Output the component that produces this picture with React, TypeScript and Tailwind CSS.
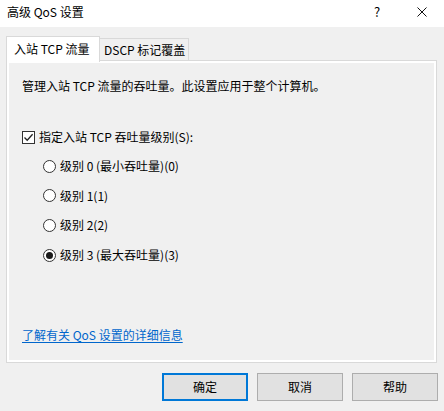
import { useState } from 'react'

const levels = ['级别 0 (最小吞吐量)(0)', '级别 1(1)', '级别 2(2)', '级别 3 (最大吞吐量)(3)']

function Radio({ checked, label, onClick }: { checked: boolean; label: string; onClick: () => void }) {
  return (
    <button onClick={onClick} className="flex h-[16px] items-center gap-[4px] text-left">
      <span className="flex h-[13px] w-[13px] items-center justify-center rounded-full border border-[#333333] bg-white">
        {checked && <span className="h-[7px] w-[7px] rounded-full bg-[#1a1a1a]" />}
      </span>
      <span>{label}</span>
    </button>
  )
}

export default function App() {
  const [enabled, setEnabled] = useState(true)
  const [level, setLevel] = useState(3)

  return (
    <div className="flex h-[411px] w-[444px] flex-col bg-[#f0f0f0] font-['Noto_Sans_CJK_SC','Noto_Sans',sans-serif] text-[12px] leading-[16px] text-black">
      <div className="flex h-[27px] items-center bg-white pl-[7px]">
        <span className="-mt-[3px]">高级 QoS 设置</span>
        <span className="ml-auto -mt-[3px] w-[10px] text-center text-[13px]">?</span>
        <svg className="ml-[35px] mr-[17px] -mt-[4px]" width="10" height="10" viewBox="0 0 10 10">
          <path d="M0.5 0.5 L9.5 9.5 M9.5 0.5 L0.5 9.5" stroke="#111" strokeWidth="1" />
        </svg>
      </div>

      <div className="ml-[6px] mt-[9px] flex items-start">
        <div className="relative z-10 -mb-[2px] flex h-[26px] w-[94px] items-start border border-b-0 border-[#d9d9d9] bg-white pl-[7px] pt-[4px]">
          入站 TCP 流量
        </div>
        <div className="mt-[2px] flex h-[22px] w-[89px] items-start border border-b-0 border-l-0 border-[#d9d9d9] bg-[#f0f0f0] pl-[4px] pt-[3px]">
          DSCP 标记覆盖
        </div>
      </div>

      <div className="ml-[6px] h-[303px] w-[431px] border border-[#d9d9d9] bg-white p-[2px]">
        <div className="flex h-full flex-col bg-[#f0f0f0] pl-[13px] pt-[15px]">
          <p>管理入站 TCP 流量的吞吐量。此设置应用于整个计算机。</p>

          <button onClick={() => setEnabled(!enabled)} className="mt-[35px] flex h-[16px] items-center gap-[4px] text-left">
            <span className="flex h-[13px] w-[13px] items-center justify-center border border-[#333333] bg-white">
              {enabled && (
                <svg width="11" height="11" viewBox="0 0 11 11">
                  <path d="M1.5 5.5 L4.2 8.3 L9.6 2.2" fill="none" stroke="#222" strokeWidth="1.3" />
                </svg>
              )}
            </span>
            <span>指定入站 TCP 吞吐量级别(S):</span>
          </button>

          <div className="mt-[13px] flex flex-col gap-[13.7px] pl-[21px]">
            {levels.map((l, i) => (
              <Radio key={l} label={l} checked={level === i} onClick={() => setLevel(i)} />
            ))}
          </div>

          <a href="#" className="mt-auto mb-[17px] self-start text-[#0066cc] underline underline-offset-[2px]">
            了解有关 QoS 设置的详细信息
          </a>
        </div>
      </div>

      <div className="mr-[6px] mt-[10px] flex justify-end gap-[9px]">
        <button className="h-[28px] w-[86px] border-2 border-[#0078d7] bg-[#e1e1e1]">确定</button>
        <button className="h-[28px] w-[86px] border border-[#adadad] bg-[#e1e1e1]">取消</button>
        <button className="h-[28px] w-[86px] border border-[#adadad] bg-[#e1e1e1]">帮助</button>
      </div>
    </div>
  )
}
